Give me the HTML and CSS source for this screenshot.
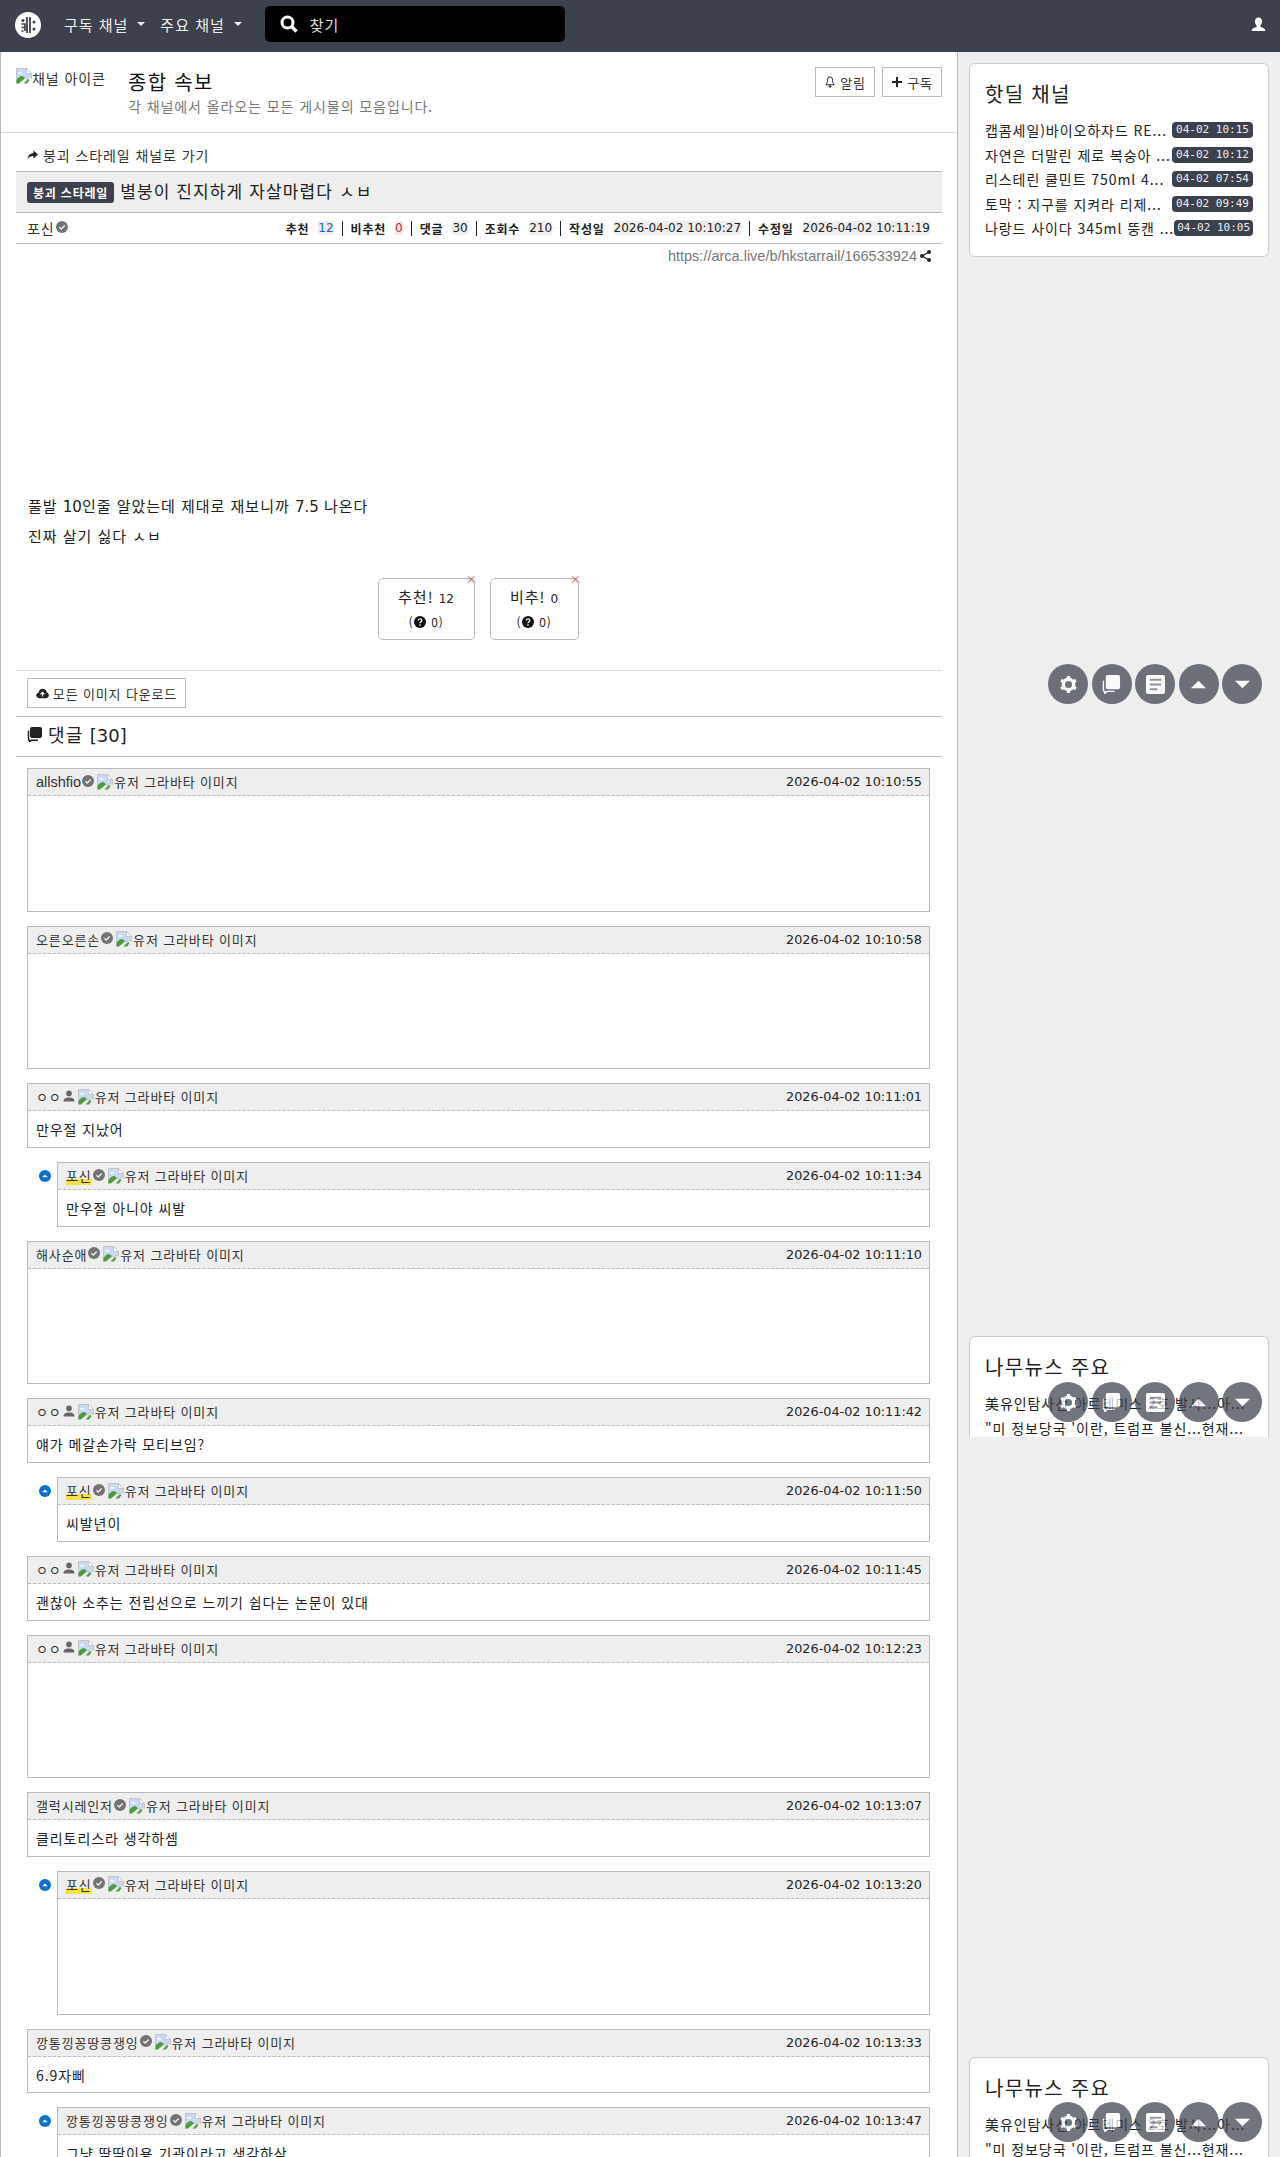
FILE: index.html
```html
<!DOCTYPE html>
<html lang="ko">
<head>
  <meta charset="UTF-8">
  <title>별붕이 진지하게 자살마렵다 ㅅㅂ</title>
  <link rel="stylesheet" href="styles.css">
</head>
<body>
  <svg class="defs" width="0" height="0">
    <symbol id="i-check" viewBox="0 0 12 12">
      <circle cx="6" cy="6" r="6" fill="#737373"/>
      <path d="M3.400 6.200l1.900 1.900 3.400-3.600" fill="none" stroke="#eee" stroke-width="1.400"/>
    </symbol>
    <symbol id="i-user" viewBox="0 0 12 12">
      <circle cx="6" cy="3.400" r="2.800" fill="#666"/>
      <path d="M0.500 11.500c0-3 2-4 5.500-4s5.500 1 5.500 4z" fill="#666"/>
    </symbol>
    <symbol id="i-broken" viewBox="0 0 16 16">
      <path d="M0.500 0.500h10l5 5v5l-2-1.500-2.500 2.500-2-1.500-3 3-1.500-1-4 3.500z" fill="#c9d9f3" stroke="#bdbdbd" stroke-width="0.800"/>
      <path d="M10.500 0.500v5h5z" fill="#fff" stroke="#bdbdbd" stroke-width="0.800"/>
      <path d="M2 5.500c.8-1.800 3.500-2 4.500 0z" fill="#fff"/>
      <path d="M0.500 15.500v-3.500c1.800-2.800 3.500-4 5.800-4l2.700 2-6 5.500z" fill="#4c9b3f"/>
      <path d="M7.500 15.500l4.500-4.500 1.500 1-2.500 3.500z" fill="#4c9b3f"/>
    </symbol>
    <symbol id="i-reply" viewBox="0 0 12 12">
      <circle cx="6" cy="6" r="6" fill="#0b70c9"/>
      <path d="M3.200 7.200L6 4.600l2.800 2.600z" fill="#fff"/>
    </symbol>
    <symbol id="i-gear" viewBox="0 0 20 20">
      <circle cx="10" cy="10" r="5.500" fill="none" stroke="#fff" stroke-width="3.500"/>
      <path d="M10 1v4M10 15v4M2.200 5.500l3.500 2M14.300 12.500l3.500 2M2.200 14.500l3.500-2M14.300 7.500l3.500-2" stroke="#fff" stroke-width="3.400"/>
    </symbol>
    <symbol id="i-chat" viewBox="0 0 20 20">
      <path d="M6 0h11a2 2 0 0 1 2 2v11a2 2 0 0 1-2 2H6a2 2 0 0 1-2-2V2a2 2 0 0 1 2-2z" fill="#fff"/>
      <path d="M1.500 6v10c0 .8.500 1.200 1.500 1.200V19.500l2.500-2.300H13" fill="none" stroke="#fff" stroke-width="1.500"/>
    </symbol>
    <symbol id="i-doc" viewBox="0 0 20 20">
      <path d="M2 0h16a2 2 0 0 1 2 2v16a2 2 0 0 1-2 2H2a2 2 0 0 1-2-2V2a2 2 0 0 1 2-2z" fill="#fff"/>
      <path d="M4 5h12M4 10h12M4 15h8" stroke="#71727a" stroke-width="2"/>
    </symbol>
  </svg>

  <nav class="navbar">
    <svg class="logo" viewBox="0 0 26 26">
      <circle cx="13" cy="13" r="13" fill="#fff"/>
      <path d="M12 5v16M15 5v16" stroke="#3d414d" stroke-width="1.800"/>
      <path d="M6.500 12h3.500v7M6.500 15.500h3.500M6.500 19h2" fill="none" stroke="#3d414d" stroke-width="1.600"/>
      <circle cx="8" cy="8.500" r="1.500" fill="#3d414d"/>
      <circle cx="19" cy="10" r="1.500" fill="#3d414d"/>
      <circle cx="19" cy="17" r="1.500" fill="#3d414d"/>
    </svg>
    <a class="nav-link">구독 채널<span class="caret"></span></a>
    <a class="nav-link">주요 채널<span class="caret"></span></a>
    <div class="search">
      <svg class="search-icon" viewBox="0 0 18 18">
        <circle cx="7.500" cy="7.500" r="5.500" fill="none" stroke="#fff" stroke-width="3"/>
        <path d="M11.500 11.500L16.500 16.500" stroke="#fff" stroke-width="3.400"/>
      </svg>
      <span>찾기</span>
    </div>
    <svg class="nav-user" viewBox="0 0 14 14">
      <path d="M7 0.500c2.200 0 3.300 1.600 3.300 3.600 0 1.700-.8 3.200-1.700 4 0 1 .5 1.300 1.800 1.800 1.500.5 2.800 1 3 3.100H.6c.2-2.100 1.500-2.600 3-3.100 1.300-.5 1.800-.8 1.800-1.800-.9-.8-1.700-2.300-1.700-4C3.700 2.100 4.800.5 7 .5z" fill="#fff"/>
    </svg>
  </nav>

  <div class="page">
    <main class="main">
      <header class="channel">
        <div class="channel-icon">
          <svg class="broken"><use href="#i-broken"/></svg><span>채널 아이콘</span>
        </div>
        <div class="channel-info">
          <h1>종합 속보</h1>
          <p>각 채널에서 올라오는 모든 게시물의 모음입니다.</p>
        </div>
        <div class="channel-btns">
          <a class="btn">
            <svg class="btn-icon" viewBox="0 0 12 12"><path d="M6 1C4 1 3.500 2.500 3.500 4.500c0 2-.8 3-1.500 3.500v.8h8V8c-.7-.5-1.500-1.500-1.500-3.500C8.500 2.500 8 1 6 1zM5 10h2v1H5z" fill="none" stroke="#222" stroke-width="1"/></svg>
            알림
          </a>
          <a class="btn">
            <svg class="btn-icon" viewBox="0 0 12 12"><path d="M6 1v10M1 6h10" stroke="#222" stroke-width="2"/></svg>
            구독
          </a>
        </div>
      </header>

      <section class="article">
        <a class="back-link">
          <svg viewBox="0 0 12 10" class="back-icon"><path d="M7 0l5 4.500L7 9V6C4 6 2 7 .5 9.500 1 5.500 3 3 7 3z" fill="#222"/></svg>
          붕괴 스타레일 채널로 가기
        </a>
        <div class="title-bar">
          <span class="badge">붕괴 스타레일</span>
          <span class="title">별붕이 진지하게 자살마렵다 ㅅㅂ</span>
        </div>
        <div class="info-bar">
          <span class="author">포신<svg class="check"><use href="#i-check"/></svg></span>
          <div class="stats">
            <b>추천</b><span class="val blue">12</span><i></i>
            <b>비추천</b><span class="val red">0</span><i></i>
            <b>댓글</b><span class="val">30</span><i></i>
            <b>조회수</b><span class="val">210</span><i></i>
            <b>작성일</b><span class="val">2026-04-02 10:10:27</span><i></i>
            <b>수정일</b><span class="val">2026-04-02 10:11:19</span>
          </div>
        </div>
        <div class="url-line">
          https://arca.live/b/hkstarrail/166533924
          <svg class="share" viewBox="0 0 11 12"><circle cx="2" cy="6" r="2" fill="#222"/><circle cx="9" cy="2" r="2" fill="#222"/><circle cx="9" cy="10" r="2" fill="#222"/><path d="M2 6l7-4M2 6l7 4" stroke="#222" stroke-width="1.300"/></svg>
        </div>

        <div class="content">
          <p>풀발 <span class="num">10</span>인줄 알았는데 제대로 재보니까 <span class="num">7.5</span> 나온다</p>
          <p>진짜 살기 싫다 ㅅㅂ</p>
        </div>

        <div class="votes">
          <div class="vote vote-up">
            <span class="vote-x">×</span>
            <div class="vote-main">추천! <small>12</small></div>
            <div class="vote-sub">(<svg class="q" viewBox="0 0 12 12"><circle cx="6" cy="6" r="6" fill="#111"/><path d="M4.300 4.600C4.300 2.300 7.800 2.300 7.800 4.400 7.800 5.800 6 5.800 6 7.300M6 8.200v1.500" fill="none" stroke="#fff" stroke-width="1.300"/></svg>0)</div>
          </div>
          <div class="vote vote-down">
            <span class="vote-x">×</span>
            <div class="vote-main">비추! <small>0</small></div>
            <div class="vote-sub">(<svg class="q" viewBox="0 0 12 12"><circle cx="6" cy="6" r="6" fill="#111"/><path d="M4.300 4.600C4.300 2.300 7.800 2.300 7.800 4.400 7.800 5.800 6 5.800 6 7.300M6 8.200v1.500" fill="none" stroke="#fff" stroke-width="1.300"/></svg>0)</div>
          </div>
        </div>

        <div class="download-row">
          <a class="btn btn-download">
            <svg class="btn-icon wide" viewBox="0 0 14 11"><path d="M3.500 10.500C1.500 10.500.3 9.200.3 7.500c0-1.500 1-2.700 2.400-2.900C3.200 2.200 5 .5 7.200.5c2.300 0 4.100 1.700 4.400 3.900 1.300.3 2.200 1.500 2.200 2.900 0 1.800-1.300 3.200-3.300 3.200z" fill="#222"/><path d="M7 8.800V4.500M4.800 6.500L7 4.200l2.200 2.300" fill="none" stroke="#fff" stroke-width="1.300"/></svg>
            모든 이미지 다운로드
          </a>
        </div>

        <h2 class="comment-title">
          <svg class="comment-icon" viewBox="0 0 15 15"><path d="M5 0h8a2 2 0 0 1 2 2v7a2 2 0 0 1-2 2H5a2 2 0 0 1-2-2V2a2 2 0 0 1 2-2z" fill="#222"/><path d="M1.500 3.500v8.500c0 .8.500 1.200 1 1.200V15l2-1.800H11" fill="none" stroke="#222" stroke-width="1.500"/></svg>
          <span>댓글 <span class="num">[30]</span></span>
        </h2>

        <div class="comments">
          <div class="comment big">
            <div class="c-head"><span class="c-name latin">allshfio</span><svg class="check"><use href="#i-check"/></svg><svg class="broken"><use href="#i-broken"/></svg><span class="c-alt">유저 그라바타 이미지</span><time>2026-04-02 10:10:55</time></div>
            <div class="c-body"></div>
          </div>
          <div class="comment big">
            <div class="c-head"><span class="c-name">오른오른손</span><svg class="check"><use href="#i-check"/></svg><svg class="broken"><use href="#i-broken"/></svg><span class="c-alt">유저 그라바타 이미지</span><time>2026-04-02 10:10:58</time></div>
            <div class="c-body"></div>
          </div>
          <div class="comment">
            <div class="c-head"><span class="c-name">ㅇㅇ</span><svg class="check"><use href="#i-user"/></svg><svg class="broken"><use href="#i-broken"/></svg><span class="c-alt">유저 그라바타 이미지</span><time>2026-04-02 10:11:01</time></div>
            <div class="c-body">만우절 지났어</div>
          </div>
          <div class="comment reply">
            <svg class="reply-icon"><use href="#i-reply"/></svg>
            <div class="c-head"><span class="c-name op">포신</span><svg class="check"><use href="#i-check"/></svg><svg class="broken"><use href="#i-broken"/></svg><span class="c-alt">유저 그라바타 이미지</span><time>2026-04-02 10:11:34</time></div>
            <div class="c-body">만우절 아니야 씨발</div>
          </div>
          <div class="comment big">
            <div class="c-head"><span class="c-name">해사순애</span><svg class="check"><use href="#i-check"/></svg><svg class="broken"><use href="#i-broken"/></svg><span class="c-alt">유저 그라바타 이미지</span><time>2026-04-02 10:11:10</time></div>
            <div class="c-body"></div>
          </div>
          <div class="comment">
            <div class="c-head"><span class="c-name">ㅇㅇ</span><svg class="check"><use href="#i-user"/></svg><svg class="broken"><use href="#i-broken"/></svg><span class="c-alt">유저 그라바타 이미지</span><time>2026-04-02 10:11:42</time></div>
            <div class="c-body">얘가 메갈손가락 모티브임?</div>
          </div>
          <div class="comment reply">
            <svg class="reply-icon"><use href="#i-reply"/></svg>
            <div class="c-head"><span class="c-name op">포신</span><svg class="check"><use href="#i-check"/></svg><svg class="broken"><use href="#i-broken"/></svg><span class="c-alt">유저 그라바타 이미지</span><time>2026-04-02 10:11:50</time></div>
            <div class="c-body">씨발년이</div>
          </div>
          <div class="comment">
            <div class="c-head"><span class="c-name">ㅇㅇ</span><svg class="check"><use href="#i-user"/></svg><svg class="broken"><use href="#i-broken"/></svg><span class="c-alt">유저 그라바타 이미지</span><time>2026-04-02 10:11:45</time></div>
            <div class="c-body">괜찮아 소추는 전립선으로 느끼기 쉽다는 논문이 있대</div>
          </div>
          <div class="comment big">
            <div class="c-head"><span class="c-name">ㅇㅇ</span><svg class="check"><use href="#i-user"/></svg><svg class="broken"><use href="#i-broken"/></svg><span class="c-alt">유저 그라바타 이미지</span><time>2026-04-02 10:12:23</time></div>
            <div class="c-body"></div>
          </div>
          <div class="comment">
            <div class="c-head"><span class="c-name">갤럭시레인저</span><svg class="check"><use href="#i-check"/></svg><svg class="broken"><use href="#i-broken"/></svg><span class="c-alt">유저 그라바타 이미지</span><time>2026-04-02 10:13:07</time></div>
            <div class="c-body">클리토리스라 생각하셈</div>
          </div>
          <div class="comment reply big">
            <svg class="reply-icon"><use href="#i-reply"/></svg>
            <div class="c-head"><span class="c-name op">포신</span><svg class="check"><use href="#i-check"/></svg><svg class="broken"><use href="#i-broken"/></svg><span class="c-alt">유저 그라바타 이미지</span><time>2026-04-02 10:13:20</time></div>
            <div class="c-body"></div>
          </div>
          <div class="comment">
            <div class="c-head"><span class="c-name">깡통낑꽁땅콩쟁잉</span><svg class="check"><use href="#i-check"/></svg><svg class="broken"><use href="#i-broken"/></svg><span class="c-alt">유저 그라바타 이미지</span><time>2026-04-02 10:13:33</time></div>
            <div class="c-body">6.9자삐</div>
          </div>
          <div class="comment reply">
            <svg class="reply-icon"><use href="#i-reply"/></svg>
            <div class="c-head"><span class="c-name">깡통낑꽁땅콩쟁잉</span><svg class="check"><use href="#i-check"/></svg><svg class="broken"><use href="#i-broken"/></svg><span class="c-alt">유저 그라바타 이미지</span><time>2026-04-02 10:13:47</time></div>
            <div class="c-body">그냥 딱딱이용 기관이라고 생각하삼</div>
          </div>
        </div>
      </section>
    </main>

    <aside class="sidebar">
      <div class="card card-hot">
        <h3>핫딜 채널</h3>
        <div class="deal"><span class="deal-text">캡콤세일)바이오하자드 RE...</span><span class="pill">04-02 10:15</span></div>
        <div class="deal"><span class="deal-text">자연은 더말린 제로 복숭아 ...</span><span class="pill">04-02 10:12</span></div>
        <div class="deal"><span class="deal-text">리스테린 쿨민트 750ml 4...</span><span class="pill">04-02 07:54</span></div>
        <div class="deal"><span class="deal-text">토막 : 지구를 지켜라 리제...</span><span class="pill">04-02 09:49</span></div>
        <div class="deal"><span class="deal-text">나랑드 사이다 345ml 뚱캔 ...</span><span class="pill">04-02 10:05</span></div>
      </div>
      <div class="card card-news">
        <h3>나무뉴스 주요</h3>
        <div class="deal"><span class="deal-text">美유인탐사선 아르테미스 2호 발사...아...</span></div>
        <div class="deal"><span class="deal-text">"미 정보당국 '이란, 트럼프 불신...현재...</span></div>
      </div>
      <div class="card card-news card-last">
        <h3>나무뉴스 주요</h3>
        <div class="deal"><span class="deal-text">美유인탐사선 아르테미스 2호 발사...아...</span></div>
        <div class="deal"><span class="deal-text">"미 정보당국 '이란, 트럼프 불신...현재...</span></div>
      </div>

      <div class="floats floats-1">
        <a class="fab"><svg viewBox="0 0 20 20"><use href="#i-gear"/></svg></a>
        <a class="fab"><svg viewBox="0 0 20 20"><use href="#i-chat"/></svg></a>
        <a class="fab"><svg viewBox="0 0 20 20"><use href="#i-doc"/></svg></a>
        <a class="fab"><svg viewBox="0 0 20 20"><path d="M2 14L10 6l8 8z" fill="#fff"/></svg></a>
        <a class="fab"><svg viewBox="0 0 20 20"><path d="M2 6h16l-8 8z" fill="#fff"/></svg></a>
      </div>
      <div class="floats floats-2">
        <a class="fab"><svg viewBox="0 0 20 20"><use href="#i-gear"/></svg></a>
        <a class="fab"><svg viewBox="0 0 20 20"><use href="#i-chat"/></svg></a>
        <a class="fab"><svg viewBox="0 0 20 20"><use href="#i-doc"/></svg></a>
        <a class="fab"><svg viewBox="0 0 20 20"><path d="M2 14L10 6l8 8z" fill="#fff"/></svg></a>
        <a class="fab"><svg viewBox="0 0 20 20"><path d="M2 6h16l-8 8z" fill="#fff"/></svg></a>
      </div>
      <div class="floats floats-3">
        <a class="fab"><svg viewBox="0 0 20 20"><use href="#i-gear"/></svg></a>
        <a class="fab"><svg viewBox="0 0 20 20"><use href="#i-chat"/></svg></a>
        <a class="fab"><svg viewBox="0 0 20 20"><use href="#i-doc"/></svg></a>
        <a class="fab"><svg viewBox="0 0 20 20"><path d="M2 14L10 6l8 8z" fill="#fff"/></svg></a>
        <a class="fab"><svg viewBox="0 0 20 20"><path d="M2 6h16l-8 8z" fill="#fff"/></svg></a>
      </div>
    </aside>
  </div>
</body>
</html>
```

FILE: styles.css
```css
* {
  box-sizing: border-box;
  letter-spacing: 0.066em;
}

html, body {
  margin: 0;
  height: 2157px;
  overflow: hidden;
}

body {
  font-family: "Noto Sans CJK KR", "Liberation Sans", sans-serif;
  font-size: 14px;
  color: #222;
  background: #eee;
}

.defs {
  position: absolute;
}

/* top bar */
.navbar {
  display: flex;
  align-items: center;
  height: 52px;
  padding-left: 15px;
  padding-bottom: 4px;
  background: #3d414d;
  color: #fff;
}

.logo {
  width: 26px;
  height: 26px;
  margin-top: 2px;
  margin-right: 23px;
}

.nav-link {
  display: flex;
  align-items: center;
  margin-right: 15px;
  font-size: 15px;
  color: #eee;
}

.caret {
  width: 0;
  height: 0;
  margin-left: 9px;
  border-left: 4px solid transparent;
  border-right: 4px solid transparent;
  border-top: 4px solid #eee;
}

.search {
  display: flex;
  align-items: center;
  width: 300px;
  height: 36px;
  margin-left: 8px;
  padding-left: 15px;
  border-radius: 5px;
  background: #000;
  font-size: 15px;
  color: #ddd;
}

.search-icon {
  width: 18px;
  height: 18px;
  margin-right: 12px;
}

.nav-user {
  width: 15px;
  height: 15px;
  margin-left: auto;
  margin-right: 14px;
}

/* page columns */
.page {
  display: flex;
  position: relative;
}

.main {
  width: 958px;
  height: 2105px;
  overflow: hidden;
  background: #fff;
  border-left: 1px solid #bbb;
  border-right: 1px solid #bbb;
}

.sidebar {
  flex: 1;
  padding: 11px 11px 0 11px;
}

/* channel header */
.channel {
  display: flex;
  height: 81px;
  padding: 16px 15px 0 15px;
  border-bottom: 1px solid #ddd;
}

.channel-icon {
  display: flex;
  flex: none;
  width: 95px;
  height: 19px;
  overflow: hidden;
  white-space: nowrap;
  line-height: 20px;
  color: #333;
  font-size: 14px;
}

.channel-info {
  margin-left: 17px;
}

.channel-info h1 {
  margin: 1px 0 0;
  font-size: 20px;
  font-weight: normal;
  line-height: 26px;
  color: #111;
}

.channel-info p {
  margin: 2px 0 0;
  font-size: 14px;
  line-height: 18px;
  color: #777;
}

.channel-btns {
  display: flex;
  gap: 7px;
  margin-left: auto;
  margin-top: -1px;
}

.btn {
  display: flex;
  align-items: center;
  justify-content: center;
  gap: 4px;
  height: 30px;
  width: 60px;
  border: 1px solid #bbb;
  font-size: 13px;
  color: #333;
}

.btn-icon {
  width: 12px;
  height: 12px;
}

.btn-icon.wide {
  width: 13px;
  height: 11px;
}

.broken {
  flex: none;
  width: 16px;
  height: 16px;
}

/* article */
.article {
  padding: 0 15px;
}

.back-link {
  display: flex;
  align-items: center;
  gap: 5px;
  height: 38px;
  padding: 5px 0 0 11px;
  font-size: 14px;
  color: #333;
}

.back-icon {
  width: 11px;
  height: 10px;
}

.title-bar {
  display: flex;
  align-items: center;
  height: 42px;
  padding-left: 11px;
  padding-bottom: 3px;
  background: #eee;
  border-top: 1px solid #bbb;
  border-bottom: 1px solid #bbb;
}

.badge {
  padding: 0 6px;
  height: 21px;
  line-height: 21px;
  margin-top: 3px;
  border-radius: 3px;
  background: #3d414d;
  color: #fff;
  font-size: 12px;
  font-weight: bold;
}

.title {
  margin-left: 6px;
  font-size: 17px;
  color: #222;
}

.info-bar {
  display: flex;
  align-items: center;
  justify-content: space-between;
  height: 31px;
  padding: 0 12px 0 11px;
  border-bottom: 1px solid #bbb;
}

.author {
  display: flex;
  align-items: center;
  font-size: 14px;
  color: #333;
}

.check {
  flex: none;
  width: 12px;
  height: 12px;
  margin: 0 3px 2px 1px;
}

.stats {
  display: flex;
  align-items: center;
  font-size: 12px;
}

.stats b {
  margin-right: 9px;
  color: #222;
}

.stats i {
  width: 1px;
  height: 15px;
  margin: 0 8px;
  background: #222;
}

.val {
  background: #eee;
  color: #222;
  font-family: "DejaVu Sans", sans-serif;
  letter-spacing: 0;
}

.val.blue {
  color: #2a5bd7;
}

.val.red {
  color: #c8242c;
}

.url-line {
  display: flex;
  align-items: center;
  justify-content: flex-end;
  gap: 3px;
  height: 24px;
  padding-right: 11px;
  font-family: "Liberation Sans", sans-serif;
  font-size: 14.5px;
  letter-spacing: 0;
  color: #777;
}

.share {
  width: 11px;
  height: 12px;
}

.content {
  display: flex;
  flex-direction: column;
  justify-content: flex-end;
  height: 283px;
  padding-left: 12px;
  font-size: 15px;
  color: #222;
}

.content p {
  margin: 0;
  height: 30px;
  line-height: 30px;
}

.num {
  font-family: "DejaVu Sans", sans-serif;
  letter-spacing: 0;
}

.votes {
  display: flex;
  justify-content: center;
  gap: 15px;
  height: 120px;
  padding-top: 27px;
  padding-right: 2px;
  border-bottom: 1px solid #ddd;
}

.vote {
  position: relative;
  height: 62px;
  border: 1px solid #bbb;
  border-radius: 5px;
  text-align: center;
}

.vote-up {
  width: 97px;
}

.vote-down {
  width: 89px;
}

.vote-x {
  position: absolute;
  top: -5px;
  right: -4px;
  font-size: 11px;
  line-height: 11px;
  color: #d9534f;
}

.vote-main {
  margin-top: 6px;
  font-size: 15px;
  line-height: 24px;
}

.vote-main small {
  font-family: "DejaVu Sans", sans-serif;
  font-size: 12px;
  letter-spacing: 0;
}

.vote-sub {
  display: flex;
  align-items: center;
  justify-content: center;
  gap: 1px;
  margin-top: 1px;
  font-size: 12px;
  line-height: 20px;
}

.q {
  width: 12px;
  height: 12px;
  margin-right: 4px;
}

.download-row {
  height: 46px;
  padding: 7px 0 0 11px;
  border-bottom: 1px solid #bbb;
}

.btn-download {
  width: 159px;
  gap: 4px;
}

.comment-title {
  display: flex;
  align-items: center;
  gap: 6px;
  height: 40px;
  margin: 0;
  padding-left: 11px;
  padding-bottom: 5px;
  font-size: 18px;
  font-weight: normal;
  color: #222;
  border-bottom: 1px solid #bbb;
}

.comment-icon {
  width: 15px;
  height: 15px;
}

/* comments */
.comments {
  padding: 11px 12px 0 11px;
}

.comment {
  position: relative;
  margin-bottom: 14px;
  border: 1px solid #bbb;
}

.reply {
  margin-left: 30px;
}

.reply-icon {
  position: absolute;
  left: -19px;
  top: 7px;
  width: 12px;
  height: 12px;
}

.c-head {
  display: flex;
  align-items: center;
  height: 27px;
  padding: 0 7px 1px 8px;
  background: #eee;
  border-bottom: 1px dashed #bbb;
  font-size: 13px;
  color: #333;
}

.c-name.op {
  background: linear-gradient(transparent 70%, #f5e04a 70%);
}

.c-name.latin {
  font-family: "Liberation Sans", sans-serif;
  font-size: 14.5px;
  letter-spacing: 0;
}

.c-alt {
  margin-left: 1px;
}

.c-head time {
  margin-left: auto;
  font-family: "DejaVu Sans", sans-serif;
  font-size: 12.8px;
  letter-spacing: 0;
  color: #222;
}

.c-body {
  height: 35.7px;
  padding: 0 8px;
  line-height: 37px;
  font-size: 14px;
  color: #222;
}

.big .c-body {
  height: 114.7px;
}

/* sidebar */
.card {
  width: 300px;
  padding: 15px 15px 0;
  background: #fff;
  border: 1px solid #ccc;
  border-radius: 6px;
}

.card h3 {
  margin: 0 0 9px;
  font-size: 20px;
  font-weight: normal;
  line-height: 30px;
  color: #222;
}

.card-hot {
  height: 194px;
}

.card-news {
  height: 101px;
  overflow: hidden;
  margin-top: 1079px;
  border-bottom: 0;
  border-bottom-left-radius: 0;
  border-bottom-right-radius: 0;
}

.card-last {
  margin-top: 620px;
}

.deal {
  display: flex;
  align-items: center;
  justify-content: space-between;
  height: 24.5px;
  font-size: 14px;
  white-space: nowrap;
  color: #222;
}

.pill {
  width: 81px;
  height: 16px;
  line-height: 16px;
  text-align: center;
  border-radius: 4px;
  background: #3d414d;
  color: #eee;
  font-family: "DejaVu Sans Mono", monospace;
  font-size: 11px;
  letter-spacing: 0;
}

/* floating buttons */
.floats {
  position: absolute;
  left: 1048px;
  display: flex;
  gap: 3.5px;
}

.floats-1 {
  top: 612px;
}

.floats-2 {
  top: 1330px;
}

.floats-3 {
  top: 2050px;
}

.fab {
  display: flex;
  align-items: center;
  justify-content: center;
  width: 40px;
  height: 40px;
  border-radius: 50%;
  background: #3d414d;
  opacity: 0.72;
}

.fab svg {
  width: 19px;
  height: 19px;
}
```
